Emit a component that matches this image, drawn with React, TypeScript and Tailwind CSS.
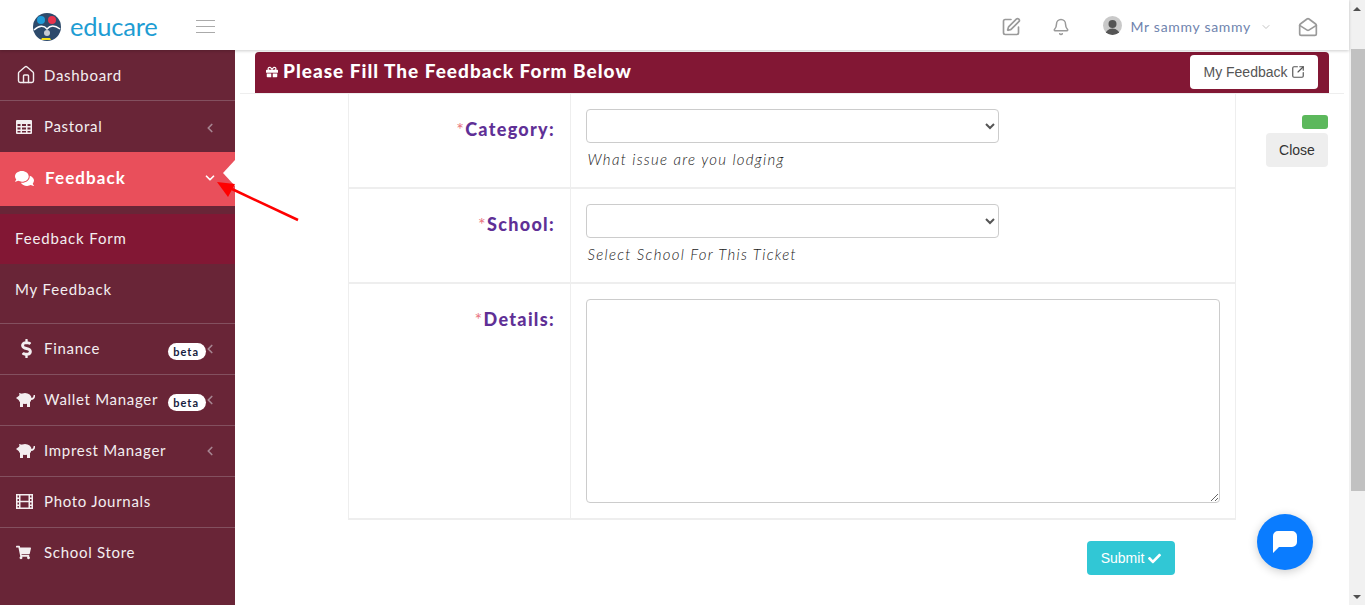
import { Bell, ChevronDown, ChevronLeft, Home, MailOpen, SquareArrowOutUpRight, SquarePen } from "lucide-react";
import type { ReactNode } from "react";
import { FaCheck, FaComments, FaDollarSign, FaGift, FaShoppingCart } from "react-icons/fa";

function Logo() {
  return (
    <div className="flex items-center gap-[8px]">
      <svg width="30" height="28" viewBox="0 0 30 28">
        <circle cx="15" cy="14" r="14" fill="#2d4a6b" />
        <circle cx="9" cy="7" r="4" fill="#1e9bd8" />
        <circle cx="20" cy="7" r="4" fill="#e8344e" />
        <path d="M2 17 Q10 10 15 16 Q20 10 28 16" fill="none" stroke="#fff" strokeWidth="1.5" />
        <circle cx="15" cy="20" r="3" fill="#c8ccd2" />
        <path d="M9 27 L19 27 L18 25 L10 25 Z" fill="#f7e21b" />
      </svg>
      <span className="text-[25.5px] leading-none tracking-[-0.2px] text-[#1f9dd3] font-['Lato',sans-serif]">educare</span>
    </div>
  );
}

function TableIcon() {
  return (
    <svg width="16" height="14" viewBox="0 0 16 14" fill="#f3eef0">
      <path d="M0 1 A1 1 0 0 1 1 0 H15 A1 1 0 0 1 16 1 V13 A1 1 0 0 1 15 14 H1 A1 1 0 0 1 0 13 Z M1.5 4 V6 H4.5 V4 Z M6 4 V6 H10 V4 Z M11.5 4 V6 H14.5 V4 Z M1.5 7.5 V9.5 H4.5 V7.5 Z M6 7.5 V9.5 H10 V7.5 Z M11.5 7.5 V9.5 H14.5 V7.5 Z M1.5 11 V12.5 H4.5 V11 Z M6 11 V12.5 H10 V11 Z M11.5 11 V12.5 H14.5 V11 Z" fillRule="evenodd" />
    </svg>
  );
}

function FilmIcon() {
  return (
    <svg width="17" height="15" viewBox="0 0 17 15" fill="#f3eef0">
      <path d="M0 0 H17 V15 H0 Z M1.5 1.5 V3.5 H3 V1.5 Z M1.5 5 V7 H3 V5 Z M1.5 8.5 V10.5 H3 V8.5 Z M1.5 12 V13.5 H3 V12 Z M14 1.5 V3.5 H15.5 V1.5 Z M14 5 V7 H15.5 V5 Z M14 8.5 V10.5 H15.5 V8.5 Z M14 12 V13.5 H15.5 V12 Z M4.5 1.5 V6.7 H12.5 V1.5 Z M4.5 8.3 V13.5 H12.5 V8.3 Z" fillRule="evenodd" />
    </svg>
  );
}

function PiggyIcon() {
  return (
    <svg width="19" height="15" viewBox="0 0 19 15" fill="#f3eef0">
      <ellipse cx="9" cy="6.5" rx="6.5" ry="5.5" />
      <path d="M0 6 L4 3 L4 9 Z" />
      <path d="M3 1 L7 2 L4 5 Z" />
      <rect x="4" y="9" width="3" height="6" />
      <rect x="11" y="9" width="3" height="6" />
      <path d="M15 6 Q18 6 17.5 3 L19 3 Q19.5 7.5 15 8 Z" />
    </svg>
  );
}

function Beta() {
  return (
    <span className="mt-[6px] -mr-[3px] rounded-full bg-white pl-[5px] pr-[7px] text-[11px] leading-[17px] font-bold tracking-[1px] text-[#16213e]">beta</span>
  );
}

function NavRow({
  icon,
  label,
  beta,
  chevron = true,
  border = true,
  lift,
}: {
  icon: ReactNode;
  label: string;
  beta?: boolean;
  chevron?: boolean;
  border?: boolean;
  lift?: boolean;
}) {
  return (
    <div className={`flex h-[51px] items-center pl-[16px] pr-[18px] text-[15px] tracking-[0.7px] text-[#f3eef0] ${border ? "border-b border-[#83505f]" : ""} ${lift ? "pb-[2px]" : ""}`}>
      <span className="flex w-[28px] shrink-0 items-center">{icon}</span>
      <span className="flex-1 whitespace-nowrap">{label}</span>
      {beta && <Beta />}
      {chevron && <ChevronLeft size={14} strokeWidth={3} className="mt-[2px] text-[#a68490]" />}
    </div>
  );
}

function Sidebar() {
  return (
    <aside className="flex w-[235px] shrink-0 flex-col bg-[#692537] font-['Lato',sans-serif]">
      <NavRow icon={<Home size={20} strokeWidth={1.7} />} label="Dashboard" chevron={false} />
      <NavRow icon={<TableIcon />} label="Pastoral" border={false} />
      <div className="relative flex h-[54px] items-center pb-[2px] pl-[15px] pr-[18px] text-[17px] font-bold tracking-[1.1px] text-white bg-[#e94f5b]">
        <span className="flex w-[30px] items-center"><FaComments size={19} /></span>
        <span className="flex-1">Feedback</span>
        <ChevronDown size={14} strokeWidth={3} />
        <span className="absolute right-0 top-[8px] border-y-[13px] border-r-[12px] border-y-transparent border-r-white" />
      </div>
      <div className="mt-[8px] flex h-[50px] items-center bg-[#821734] pb-[2px] pl-[15px] text-[15px] tracking-[0.85px] text-[#f3eef0]">Feedback Form</div>
      <div className="flex h-[51px] items-center pl-[15px] text-[15px] tracking-[0.85px] text-[#f3eef0]">My Feedback</div>
      <div className="h-[9px] border-b border-[#83505f]" />
      <NavRow lift icon={<FaDollarSign size={19} className="ml-[1px]" />} label="Finance" beta />
      <NavRow lift icon={<PiggyIcon />} label="Wallet Manager" beta />
      <NavRow lift icon={<PiggyIcon />} label="Imprest Manager" />
      <NavRow lift icon={<FilmIcon />} label="Photo Journals" chevron={false} />
      <NavRow lift icon={<FaShoppingCart size={15} />} label="School Store" chevron={false} border={false} />
    </aside>
  );
}

function Header() {
  return (
    <header className="relative z-10 flex h-[50px] shrink-0 items-center bg-white pl-[32px] pr-[31px] pt-[3px] shadow-[0_1px_3px_rgba(0,0,0,0.2)]">
      <Logo />
      <div className="ml-[38px] flex w-[19px] flex-col gap-[5px]">
        <span className="h-px bg-[#aaa]" />
        <span className="h-px bg-[#aaa]" />
        <span className="h-px bg-[#aaa]" />
      </div>
      <div className="ml-auto flex items-center text-[#9a9a9a]">
        <SquarePen size={20} />
        <Bell size={18} className="ml-[31px]" />
        <span className="ml-[33px] -mt-[2px] flex h-[19px] w-[19px] items-end justify-center overflow-hidden rounded-full bg-[#c9c9c9]">
          <svg width="15" height="16" viewBox="0 0 15 16" fill="#555">
            <circle cx="7.5" cy="5" r="4" />
            <path d="M0 16 Q1 10 7.5 9.5 Q14 10 15 16Z" />
          </svg>
        </span>
        <span className="ml-[8px] text-[14px] tracking-[0.7px] text-[#6f84ae] font-['Lato',sans-serif]">Mr sammy sammy</span>
        <ChevronDown size={12} className="ml-[9px] text-[#c4c4c4]" />
        <MailOpen size={20} className="ml-[26px]" />
      </div>
    </header>
  );
}

function Label({ children }: { children: string }) {
  return (
    <div className="w-[222px] shrink-0 border-r border-[#eee] pt-[23px] pr-[15px] text-right text-[18px] leading-[24px] font-black tracking-[1.3px] text-[#5f3096] font-['Lato',sans-serif]">
      <span className="font-normal text-[#e9737e]">*</span>
      {children}
    </div>
  );
}

function SelectRow({ label, hint }: { label: string; hint: string }) {
  return (
    <div className="flex h-[95px] border-b-2 border-[#eee]">
      <Label>{label}</Label>
      <div className="flex-1 pl-[15px] pt-[15px]">
        <select className="block h-[34px] w-[413px] rounded-[4px] border border-[#ccc] bg-white text-[#555]">
          <option></option>
        </select>
        <p className="mt-[6px] pl-[1.5px] text-[15px] leading-[20px] font-light tracking-[1.3px] text-[#222] italic font-['Lato',sans-serif]">{hint}</p>
      </div>
    </div>
  );
}

function Banner() {
  return (
    <div className="ml-[5px] flex h-[41px] items-center justify-between rounded-t-[4px] bg-[#821734] pb-[1px] pl-[11px] pr-[11px]">
      <h1 className="flex items-center gap-[5px] pb-[2px] text-[19px] font-black tracking-[1px] text-white font-['Lato',sans-serif]">
        <FaGift size={12} className="mt-[2px]" />
        Please Fill The Feedback Form Below
      </h1>
      <button className="flex h-[34px] w-[128px] items-center justify-center gap-[3px] rounded-[4px] bg-white text-[14px] text-[#555] font-['Liberation_Sans',sans-serif]">
        My Feedback
        <SquareArrowOutUpRight size={14} />
      </button>
    </div>
  );
}

function FeedbackForm() {
  return (
    <div className="flex flex-1">
      <div className="ml-[108px] w-[888px]">
        <div className="border-x border-[#eee]">
          <SelectRow label="Category:" hint="What issue are you lodging" />
          <SelectRow label="School:" hint="Select School For This Ticket" />
          <div className="flex h-[236px] border-b-2 border-[#eee]">
            <Label>Details:</Label>
            <div className="flex-1 pl-[15px] pt-[15px]">
              <textarea className="block h-[204px] w-[634px] rounded-[4px] border border-[#ccc] bg-white" />
            </div>
          </div>
        </div>
        <div className="mt-[21px] flex justify-end pr-[61px]">
          <button className="flex h-[34px] w-[88px] items-center justify-center gap-[4px] rounded-[4px] bg-[#31c7d5] text-[14px] text-white font-['Liberation_Sans',sans-serif]">
            Submit <FaCheck size={13} />
          </button>
        </div>
      </div>
      <div className="ml-[30px] flex w-[62px] flex-col items-end pt-[21px]">
        <span className="h-[14px] w-[26px] rounded-[3px] bg-[#5cb85c]" />
        <button className="mt-[4px] h-[34px] w-[62px] rounded-[4px] bg-[#eee] text-[14px] text-[#333] font-['Liberation_Sans',sans-serif]">Close</button>
      </div>
    </div>
  );
}

function Scrollbar() {
  return (
    <div className="flex h-full w-[16px] shrink-0 flex-col items-center justify-between bg-[#f1f1f1]">
      <div className="flex w-full flex-col items-center">
        <span className="mt-[7px] border-x-[4px] border-b-[4px] border-x-transparent border-b-[#505050]" />
        <span className="ml-[1px] mt-[38px] h-[442px] w-[14px] bg-[#c1c1c1]" />
      </div>
      <span className="mb-[6px] border-x-[4px] border-t-[4px] border-x-transparent border-t-[#505050]" />
    </div>
  );
}

export default function App() {
  return (
    <div className="relative flex h-[605px] w-[1365px] overflow-hidden bg-white">
      <div className="flex min-w-0 flex-1 flex-col">
        <Header />
        <div className="flex flex-1">
          <Sidebar />
          <main className="flex flex-1 flex-col pt-[2px]">
            <div className="ml-[15px] mr-[20px]">
              <Banner />
            </div>
            <div className="ml-[5px] mr-[5px] border-t border-[#eee]">
              <FeedbackForm />
            </div>
          </main>
        </div>
      </div>
      <Scrollbar />

      {/* annotation arrow drawn over the sidebar */}
      <svg className="absolute left-[210px] top-[175px]" width="95" height="50" viewBox="0 0 95 50">
        <path d="M88 45 L22 14" stroke="#f00" strokeWidth="2.5" />
        <path d="M7 7 L25 9 L18 22 Z" fill="#f00" />
      </svg>

      <button className="absolute left-[1257px] top-[514px] flex h-[56px] w-[56px] items-center justify-center rounded-full bg-[#0a7cff] shadow-[0_2px_10px_rgba(0,0,0,0.2)]">
        <svg width="26" height="26" viewBox="0 0 26 26" fill="#fff">
          <path d="M6 2 H20 A5 5 0 0 1 25 7 V13 A5 5 0 0 1 20 18 H7 L1 24 V7 A5 5 0 0 1 6 2 Z" />
        </svg>
      </button>
    </div>
  );
}
